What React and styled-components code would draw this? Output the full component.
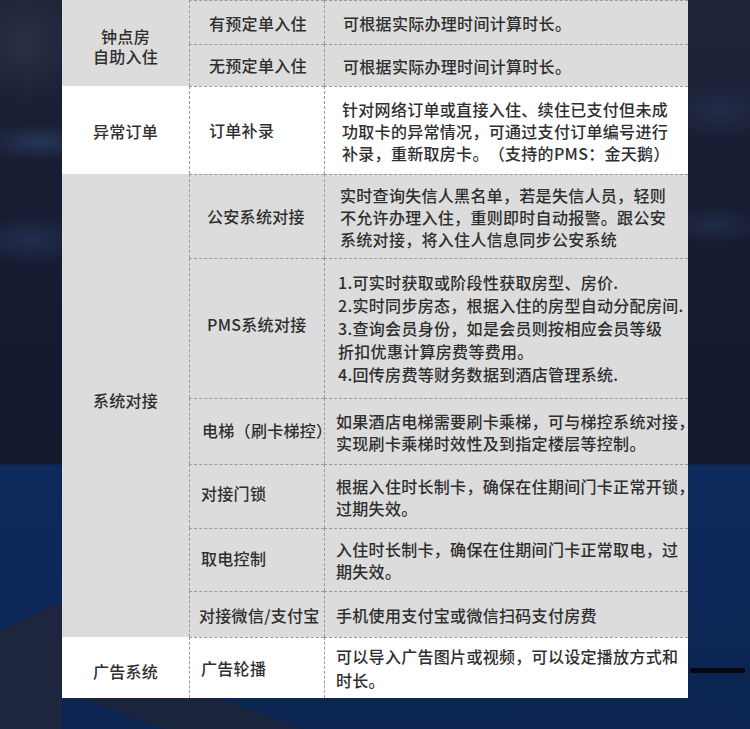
import React from "react";
import styled, { createGlobalStyle } from "styled-components";

const GlobalStyle = createGlobalStyle`
  html, body { margin: 0; padding: 0; background: #0e1a33; }
  * { box-sizing: border-box; }
`;

const Page = styled.div`
  position: relative;
  width: 750px;
  height: 729px;
  overflow: hidden;
  padding: 0 62px;
  font-family: "Noto Sans CJK SC", "Noto Sans", sans-serif;
  background:
    linear-gradient(154deg, transparent 30%, rgba(30, 38, 60, 0.95) 31%) no-repeat 0 575px / 62px 154px,
    linear-gradient(200deg, transparent 30%, rgba(28, 36, 58, 0.9) 31%, rgba(28, 36, 58, 0.9) 70%, transparent 71%) no-repeat 62px 690px / 240px 39px,
    radial-gradient(ellipse 60px 18px at 40px 142px, rgba(60, 95, 150, 0.35), transparent),
    radial-gradient(ellipse 55px 55px at 25px 45px, rgba(70, 80, 100, 0.3), transparent),
    radial-gradient(ellipse 60px 25px at 30px 240px, rgba(55, 85, 140, 0.3), transparent),
    radial-gradient(ellipse 55px 28px at 720px 110px, rgba(50, 75, 120, 0.3), transparent),
    radial-gradient(ellipse 45px 18px at 715px 225px, rgba(55, 90, 135, 0.25), transparent),
    linear-gradient(180deg, #1e2539 0px, #1a1f35 120px, #171b31 300px, #14182d 463px, #0d2a5d 466px, #0c2757 600px, #0b2450 729px);
`;

const Bar = styled.div`
  position: absolute;
  left: 690px;
  top: 668px;
  width: 55px;
  height: 5px;
  border-radius: 2px;
  background: #05070d;
`;

const Table = styled.div`
  display: grid;
  grid-template-columns: 127px 135px 364px;
  grid-template-rows: ${(p) => p.$rows};
  color: #2f2f2f;
  font-size: 16px;
  font-weight: 500;
  letter-spacing: 0.3px;
  text-spacing-trim: space-all;
`;

const toneColor = (t) => (t === "white" ? "#ffffff" : "#dcdcdc");

const GroupCell = styled.div`
  grid-row: span ${(p) => p.$span};
  background: ${(p) => toneColor(p.$tone)};
  display: flex;
  flex-direction: column;
  align-items: center;
  justify-content: center;
  line-height: 20px;
  padding-top: ${(p) => Math.max(p.$offset, 0)}px;
  padding-bottom: ${(p) => Math.max(-p.$offset, 0)}px;
`;

const NameCell = styled.div`
  background: ${(p) => toneColor(p.$tone)};
  border-left: 1px dashed #9a9a9a;
  border-top: 1px dashed #9a9a9a;
  display: flex;
  align-items: center;
  padding-left: ${(p) => p.$pad}px;
  padding-bottom: ${(p) => p.$lift}px;
  white-space: nowrap;
  min-width: 0;
`;

const DescCell = styled.div`
  background: ${(p) => toneColor(p.$tone)};
  border-left: 1px dashed #9a9a9a;
  border-top: 1px dashed #9a9a9a;
  display: flex;
  flex-direction: column;
  justify-content: center;
  padding-left: ${(p) => p.$pad}px;
  line-height: ${(p) => p.$lh}px;
  min-width: 0;
`;

const Line = styled.span`
  display: block;
  white-space: nowrap;
`;

const groups = [
  {
    title: ["钟点房", "自助入住"],
    tone: "gray",
    offset: 5,
    items: [
      { name: "有预定单入住", h: 44, np: 19, dp: 18, lines: ["可根据实际办理时间计算时长。"] },
      { name: "无预定单入住", h: 42, np: 19, dp: 18, lift: 2, lines: ["可根据实际办理时间计算时长。"] },
    ],
  },
  {
    title: ["异常订单"],
    tone: "white",
    offset: 2,
    items: [
      {
        name: "订单补录",
        h: 88,
        np: 19,
        dp: 17,
        lift: 2,
        lines: [
          "针对网络订单或直接入住、续住已支付但未成",
          "功取卡的异常情况，可通过支付订单编号进行",
          "补录，重新取房卡。（支持的PMS：金天鹅）",
        ],
      },
    ],
  },
  {
    title: ["系统对接"],
    tone: "gray",
    offset: -12,
    items: [
      {
        name: "公安系统对接",
        h: 84,
        np: 17,
        dp: 15,
        lift: 2,
        lines: [
          "实时查询失信人黑名单，若是失信人员，轻则",
          "不允许办理入住，重则即时自动报警。跟公安",
          "系统对接，将入住人信息同步公安系统",
        ],
      },
      {
        name: "PMS系统对接",
        h: 140,
        np: 17,
        dp: 13,
        lh: 23,
        lift: 10,
        lines: [
          "1.可实时获取或阶段性获取房型、房价.",
          "2.实时同步房态，根据入住的房型自动分配房间.",
          "3.查询会员身份，如是会员则按相应会员等级",
          "折扣优惠计算房费等费用。",
          "4.回传房费等财务数据到酒店管理系统.",
        ],
      },
      {
        name: "电梯（刷卡梯控）",
        h: 66,
        np: 12,
        dp: 11,
        lift: 3,
        lines: ["如果酒店电梯需要刷卡乘梯，可与梯控系统对接，", "实现刷卡乘梯时效性及到指定楼层等控制。"],
      },
      {
        name: "对接门锁",
        h: 64,
        np: 11,
        dp: 11,
        lift: 7,
        lines: ["根据入住时长制卡，确保在住期间门卡正常开锁，", "过期失效。"],
      },
      {
        name: "取电控制",
        h: 63,
        np: 11,
        dp: 11,
        lift: 5,
        lines: ["入住时长制卡，确保在住期间门卡正常取电，过", "期失效。"],
      },
      { name: "对接微信/支付宝", h: 46, np: 9, dp: 11, lines: ["手机使用支付宝或微信扫码支付房费"] },
    ],
  },
  {
    title: ["广告系统"],
    tone: "white",
    offset: 6,
    items: [
      {
        name: "广告轮播",
        h: 61,
        np: 11,
        dp: 11,
        lh: 24,
        lines: ["可以导入广告图片或视频，可以设定播放方式和", "时长。"],
      },
    ],
  },
];

export default function App() {
  const rows = groups
    .flatMap((g) => g.items.map((i) => `${i.h}px`))
    .join(" ");
  return (
    <>
      <GlobalStyle />
      <Page>
        <Table $rows={rows}>
          {groups.map((g, gi) => (
            <React.Fragment key={gi}>
              <GroupCell $span={g.items.length} $tone={g.tone} $offset={g.offset}>
                {g.title.map((t) => (
                  <Line key={t}>{t}</Line>
                ))}
              </GroupCell>
              {g.items.map((it) => (
                <React.Fragment key={it.name}>
                  <NameCell $tone={g.tone} $pad={it.np} $lift={it.lift || 0}>
                    {it.name}
                  </NameCell>
                  <DescCell $tone={g.tone} $pad={it.dp} $lh={it.lh || 22}>
                    {it.lines.map((l, li) => (
                      <Line key={li}>{l}</Line>
                    ))}
                  </DescCell>
                </React.Fragment>
              ))}
            </React.Fragment>
          ))}
        </Table>
        <Bar />
      </Page>
    </>
  );
}
